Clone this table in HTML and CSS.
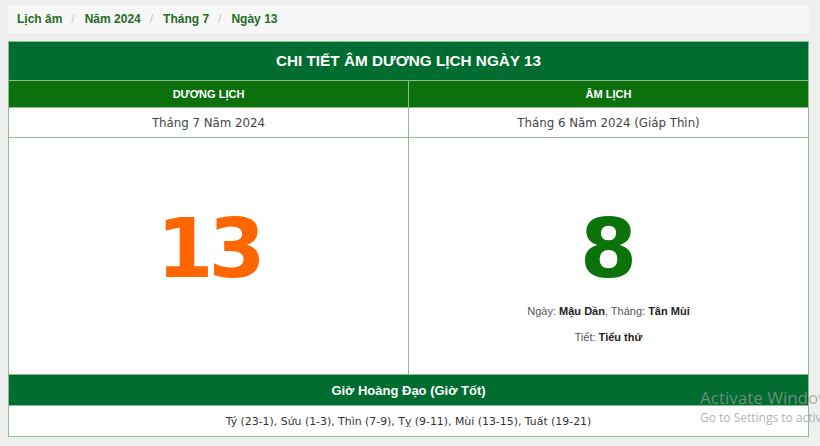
FILE: index.html
```html
<!DOCTYPE html>
<html lang="vi">
<head>
<meta charset="utf-8">
<title>Chi tiết âm dương lịch ngày 13</title>
<link rel="stylesheet" href="styles.css">
</head>
<body>
<nav class="crumbs">
  <a class="crumb" href="#">Lịch âm</a>
  <a class="crumb" href="#">Năm 2024</a>
  <a class="crumb" href="#">Tháng 7</a>
  <a class="crumb" href="#">Ngày 13</a>
</nav>
<table class="cal">
  <tr><th class="title" colspan="2">CHI TIẾT ÂM DƯƠNG LỊCH NGÀY 13</th></tr>
  <tr><th class="sub">DƯƠNG LỊCH</th><th class="sub">ÂM LỊCH</th></tr>
  <tr><td class="month">Tháng 7 Năm 2024</td><td class="month">Tháng 6 Năm 2024 (Giáp Thìn)</td></tr>
  <tr>
    <td class="day"><div class="num solar">13</div></td>
    <td class="day">
      <div class="num lunar">8</div>
      <div class="info">Ngày: <b>Mậu Dần</b>, Tháng: <b>Tân Mùi</b></div>
      <div class="info">Tiết: <b>Tiểu thử</b></div>
    </td>
  </tr>
  <tr><th class="title hours" colspan="2">Giờ Hoàng Đạo (Giờ Tốt)</th></tr>
  <tr><td class="month last" colspan="2">Tý (23-1), Sứu (1-3), Thìn (7-9), Tỵ (9-11), Mùi (13-15), Tuất (19-21)</td></tr>
</table>
<div class="activate">
  <div class="act-title">Activate Windows</div>
  <div class="act-sub">Go to Settings to activate Windows.</div>
</div>
</body>
</html>
```
FILE: styles.css
```css
html, body { margin: 0; padding: 0; }
html { overflow: hidden; }
body {
  background: #efefef;
  font-family: "Liberation Sans", Arial, sans-serif;
  padding: 5px 11px 0 8px;
  width: 801px;
}
.crumbs {
  background: #f7f7f7;
  height: 28px;
  display: flex;
  align-items: center;
  padding-left: 9px;
  box-sizing: border-box;
  font-size: 12px;
  font-weight: bold;
}
.crumb { color: #236b23; text-decoration: none; }
.crumb + .crumb::before {
  content: "/";
  color: #c8c8c8;
  font-weight: normal;
  padding: 0 10px 0 9px;
}
.cal {
  margin-top: 8px;
  width: 801px;
  border-collapse: collapse;
  background: #fff;
  table-layout: fixed;
}
.cal th, .cal td {
  border: 1px solid #8cbd8c;
  padding: 0;
  text-align: center;
}
.title {
  background: #006d30;
  color: #fff;
  font-size: 15.3px;
  height: 38px;
}
.sub {
  background: #0c700c;
  color: #fff;
  font-size: 11px;
  height: 26px;
}
.month {
  font-family: "DejaVu Sans", Verdana, sans-serif;
  font-size: 11.8px;
  color: #444;
  height: 29px;
}
.day { height: 236px; vertical-align: top; }
.num {
  font-family: "DejaVu Sans", Verdana, sans-serif;
  font-weight: bold;
  font-size: 82px;
  line-height: 82px;
  margin-top: 70px;
}
.solar { color: #ff6600; letter-spacing: -5px; }
.lunar { color: #0a740a; }
.info { font-size: 11px; color: #555; margin-top: 15px; }
.info + .info { margin-top: 14px; }
.info b { color: #222; }
.hours { font-size: 13px; height: 30px; }
.last { height: 30px; font-size: 10.9px; color: #333; }
.activate {
  position: absolute;
  left: 700px;
  top: 387px;
  white-space: nowrap;
  color: rgba(150,150,150,0.75);
  font-family: "Open Sans", sans-serif;
}
.act-title { font-size: 17px; line-height: 22px; }
.act-sub { font-size: 12px; line-height: 18px; }
```
